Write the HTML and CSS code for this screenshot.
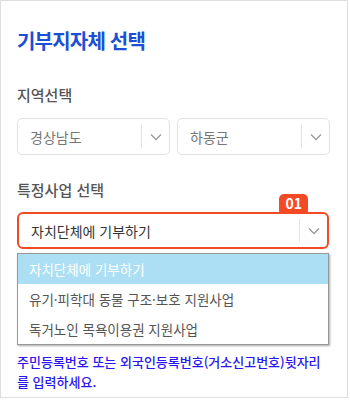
FILE: index.html
```html
<!DOCTYPE html>
<html lang="ko">
<head>
    <meta charset="UTF-8">
    <meta name="viewport" content="width=device-width, initial-scale=1.0">
    <title>기부지자체 선택</title>
    <link rel="stylesheet" href="styles.css">
</head>
<body>
<div class="panel">
    <h1 class="title">기부지자체 선택</h1>

    <div class="label">지역선택</div>
    <div class="select-row">
        <div class="select">
            <span class="select-text">경상남도</span>
            <span class="select-arrow"><svg width="12" height="8" viewBox="0 0 12 8"><path d="M1 1.5l5 5 5-5" fill="none" stroke="#999" stroke-width="1.3"/></svg></span>
        </div>
        <div class="select">
            <span class="select-text">하동군</span>
            <span class="select-arrow"><svg width="12" height="8" viewBox="0 0 12 8"><path d="M1 1.5l5 5 5-5" fill="none" stroke="#999" stroke-width="1.3"/></svg></span>
        </div>
    </div>

    <div class="label label-second">특정사업 선택</div>
    <div class="select-wrap">
        <span class="badge">01</span>
        <div class="select select-active">
            <span class="select-text">자치단체에 기부하기</span>
            <span class="select-arrow"><svg width="12" height="8" viewBox="0 0 12 8"><path d="M1 1.5l5 5 5-5" fill="none" stroke="#999" stroke-width="1.3"/></svg></span>
        </div>
        <ul class="options">
            <li class="option selected">자치단체에 기부하기</li>
            <li class="option">유기·피학대 동물 구조·보호 지원사업</li>
            <li class="option">독거노인 목욕이용권 지원사업</li>
        </ul>
    </div>

    <p class="notice">주민등록번호 또는 외국인등록번호(거소신고번호)뒷자리를 입력하세요.</p>
</div>
</body>
</html>
```

FILE: styles.css
```css
body {
    margin: 0;
    font-family: "Noto Sans CJK KR", "Noto Sans", sans-serif;
    background-color: #fff;
}
.panel {
    width: 348px;
    height: 398px;
    box-sizing: border-box;
    border: 1px solid #dedede;
    padding: 26px 17px 0 16px;
}
.title {
    margin: 0 0 29px;
    font-size: 20px;
    line-height: 28px;
    font-weight: 700;
    color: #1b4fd6;
    letter-spacing: -0.8px;
}
.label {
    font-size: 15px;
    line-height: 21px;
    font-weight: 500;
    color: #555;
    margin-bottom: 13px;
}
.label-second {
    margin-top: 24px;
    margin-bottom: 12px;
}
.select-row {
    display: flex;
    gap: 7px;
}
.select {
    flex: 1;
    display: flex;
    align-items: center;
    height: 37px;
    box-sizing: border-box;
    border: 1px solid #e2e2e2;
    border-radius: 5px;
    background-color: #fff;
}
.select-text {
    flex: 1;
    padding-left: 12px;
    font-size: 14px;
    color: #777;
}
.select-arrow {
    width: 27px;
    height: 23px;
    border-left: 1px solid #e2e2e2;
    display: flex;
    align-items: center;
    justify-content: center;
}
.select-wrap {
    position: relative;
    padding-right: 1px;
}
.select-active {
    border: 2px solid #f24a25;
    border-radius: 6px;
}
.select-active .select-text {
    color: #333;
}
.badge {
    position: absolute;
    right: 22px;
    top: -18px;
    background-color: #f24a25;
    color: #fff;
    font-size: 14px;
    font-weight: 700;
    line-height: 19px;
    padding: 0 6px;
    border-radius: 5px 5px 2px 2px;
}
.options {
    list-style: none;
    margin: 4px 0 0;
    padding: 0;
    border: 1px solid #999;
    box-shadow: 1px 1px 2px rgba(0, 0, 0, 0.35);
    background-color: #fff;
}
.option {
    height: 30px;
    line-height: 30px;
    padding-left: 11px;
    font-size: 13.5px;
    color: #555;
}
.option.selected {
    background-color: #acdff4;
    color: #fff;
}
.notice {
    margin: 7px 0 0;
    font-size: 13px;
    line-height: 20px;
    font-weight: 500;
    color: #2a14f0;
    word-break: break-all;
}
```
